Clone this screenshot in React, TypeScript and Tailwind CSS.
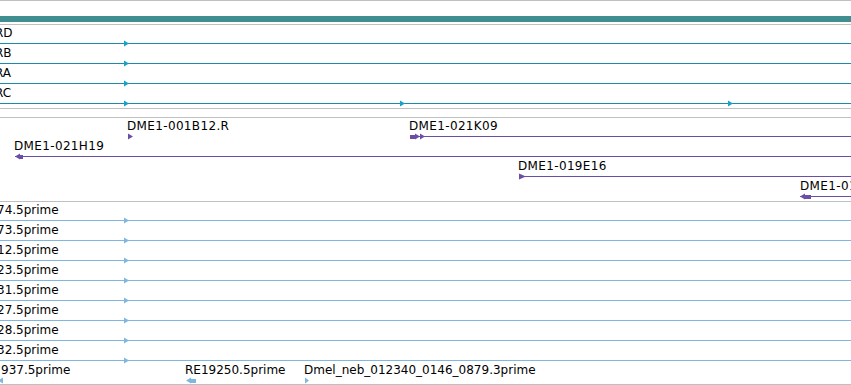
import type { ReactNode } from 'react';

const GREY = '#c0c0c0';
const TEAL_LINE = '#1b8bab';
const TEAL_ARROW = '#19a2c6';
const PURPLE = '#6b4fa6';
const SKY = '#80b7e0';

type Label = { text: string; cls: string };

function Row({ labels, children }: { labels: Label[]; children?: ReactNode }) {
  return (
    <div className="relative h-[20px]">
      {labels.map((l) => (
        <span
          key={l.text + l.cls}
          className={`absolute top-[1px] whitespace-nowrap leading-[15px] ${l.cls}`}
        >
          {l.text}
        </span>
      ))}
      <svg
        className="absolute left-0 top-[15px] overflow-visible"
        width={851}
        height={7}
        shapeRendering="crispEdges"
      >
        {children}
      </svg>
    </div>
  );
}

const Line = ({ from = 0, color }: { from?: number; color: string }) => (
  <rect x={from} y={3} width={851 - from} height={1} fill={color} />
);

const Right = ({ x, color, w = 5 }: { x: number; color: string; w?: number }) => (
  <polygon
    points={`${x},0.5 ${x + w},3.5 ${x},6.5`}
    fill={color}
    shapeRendering="auto"
  />
);

const Left = ({ x, color, tail = 0 }: { x: number; color: string; tail?: number }) => (
  <g>
    <polygon
      points={`${x},3.5 ${x + 5},0.5 ${x + 5},6.5`}
      fill={color}
      shapeRendering="auto"
    />
    {tail > 0 && <rect x={x + 5} y={1.5} width={tail} height={4} fill={color} />}
  </g>
);

const Divider = () => <div className="h-px bg-[#c0c0c0]" />;

const transcripts = ['RD', 'RB', 'RA', 'RC'];
const primes = [
  '74.5prime',
  '73.5prime',
  '12.5prime',
  '23.5prime',
  '31.5prime',
  '27.5prime',
  '28.5prime',
  '32.5prime',
];

export default function App() {
  return (
    <div
      className="w-[851px] h-[385px] overflow-hidden bg-white text-[12px] text-black"
      style={{ fontFamily: '"DejaVu Sans", Verdana, sans-serif' }}
    >
      <Divider />
      <div className="h-[15px]" />
      <div className="h-[6px] bg-[#418e90]" />
      <div className="h-[2px]" />
      <Divider />

      {/* gene models */}
      {transcripts.map((t, i) => (
        <Row key={t} labels={[{ text: t, cls: 'left-[-5px]' }]}>
          <Line color={TEAL_LINE} />
          <Right x={124} color={TEAL_ARROW} />
          {i === 3 && <Right x={400} color={TEAL_ARROW} />}
          {i === 3 && <Right x={728} color={TEAL_ARROW} />}
        </Row>
      ))}
      <div className="h-[3px]" />
      <Divider />
      <div className="h-[8px]" />
      <Divider />

      {/* cDNA clones */}
      <Row
        labels={[
          { text: 'DME1-001B12.R', cls: 'left-[127px] tracking-[0.35px]' },
          { text: 'DME1-021K09', cls: 'left-[409px] tracking-[0.35px]' },
        ]}
      >
        <Right x={128} color={PURPLE} />
        <Line from={410} color={PURPLE} />
        <rect x={410} y={1.5} width={5} height={4} fill={PURPLE} />
        <Right x={415} color={PURPLE} />
        <Right x={420} color={PURPLE} />
      </Row>
      <Row labels={[{ text: 'DME1-021H19', cls: 'left-[14px] tracking-[0.35px]' }]}>
        <Line from={15} color={PURPLE} />
        <Left x={15} color={PURPLE} tail={3} />
      </Row>
      <Row labels={[{ text: 'DME1-019E16', cls: 'left-[518px] tracking-[0.35px]' }]}>
        <Line from={519} color={PURPLE} />
        <Right x={519} color={PURPLE} w={7} />
      </Row>
      <Row labels={[{ text: 'DME1-011F20', cls: 'left-[800px] tracking-[0.35px]' }]}>
        <Line from={800} color={PURPLE} />
        <Left x={800} color={PURPLE} tail={6} />
      </Row>
      <div className="h-[3px]" />
      <Divider />

      {/* ESTs */}
      {primes.map((p) => (
        <Row key={p} labels={[{ text: p, cls: 'left-[-3px]' }]}>
          <Line color={SKY} />
          <Right x={124} color={SKY} />
        </Row>
      ))}
      <Row
        labels={[
          { text: '937.5prime', cls: 'left-[1px]' },
          { text: 'RE19250.5prime', cls: 'left-[185px]' },
          { text: 'Dmel_neb_012340_0146_0879.3prime', cls: 'left-[304px]' },
        ]}
      >
        <Left x={-2} color={SKY} />
        <Left x={186} color={SKY} tail={5} />
        <Right x={305} color={SKY} w={4} />
      </Row>
      <div className="h-[2px]" />
      <div className="h-px" style={{ backgroundColor: GREY }} />
    </div>
  );
}
